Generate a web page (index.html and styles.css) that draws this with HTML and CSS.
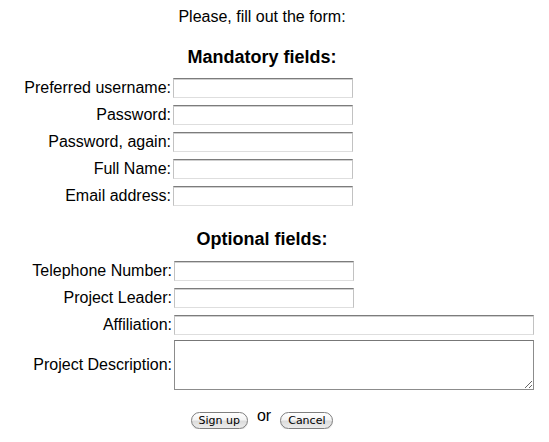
FILE: index.html
```html
<!DOCTYPE html>
<html>
<head>
<meta charset="utf-8">
<title>Sign up</title>
<link rel="stylesheet" href="styles.css">
</head>
<body>
<div class="page">
  <p class="intro">Please, fill out the form:</p>

  <h2 class="section section-first">Mandatory fields:</h2>
  <div class="fields fields-mandatory">
    <label class="label" for="username">Preferred username:</label>
    <input class="text" id="username" type="text">
    <label class="label" for="pw1">Password:</label>
    <input class="text" id="pw1" type="password">
    <label class="label" for="pw2">Password, again:</label>
    <input class="text" id="pw2" type="password">
    <label class="label" for="fullname">Full Name:</label>
    <input class="text" id="fullname" type="text">
    <label class="label" for="email">Email address:</label>
    <input class="text" id="email" type="text">
  </div>

  <h2 class="section section-second">Optional fields:</h2>
  <div class="fields fields-optional">
    <label class="label" for="phone">Telephone Number:</label>
    <input class="text" id="phone" type="text">
    <label class="label" for="leader">Project Leader:</label>
    <input class="text" id="leader" type="text">
    <label class="label" for="affiliation">Affiliation:</label>
    <input class="text text-wide" id="affiliation" type="text">
    <label class="label label-desc" for="desc">Project Description:</label>
    <textarea class="area" id="desc"></textarea>
  </div>

  <div class="actions">
    <button class="btn" type="submit">Sign up</button>
    <span class="or">or</span>
    <button class="btn" type="button">Cancel</button>
  </div>
</div>
</body>
</html>
```

FILE: styles.css
```css
html, body {
  margin: 0;
  padding: 0;
  background: #ffffff;
}

body {
  font-family: "Liberation Sans", Arial, Helvetica, sans-serif;
  font-size: 16px;
  line-height: 18px;
  color: #000000;
}

.page {
  width: 524px;
  padding-top: 8px;
}

.intro {
  margin: 0;
  text-align: center;
}

.section {
  margin: 0;
  font-size: 18px;
  line-height: 20px;
  font-weight: bold;
  text-align: center;
}

.section-first {
  margin-top: 21px;
  margin-bottom: 11px;
}

.section-second {
  margin-top: 23px;
  margin-bottom: 12px;
}

.fields {
  display: grid;
  row-gap: 7px;
  align-items: center;
}

.fields-mandatory {
  grid-template-columns: 171px auto;
  column-gap: 2px;
}

.fields-optional {
  grid-template-columns: 172px auto;
  column-gap: 2px;
}

.label {
  text-align: right;
  white-space: nowrap;
}

.text {
  box-sizing: border-box;
  width: 180px;
  height: 20px;
  margin: 0;
  padding: 1px 3px;
  font-family: "Liberation Sans", Arial, sans-serif;
  font-size: 13px;
  background: #ffffff;
  border-style: solid;
  border-width: 1px;
  border-color: #7c7c7c #c2c2c2 #dedede #c2c2c2;
  box-shadow: inset 0 1px 0 #cfcfcf;
  border-radius: 0;
  outline: none;
}

.text-wide {
  width: 360px;
}

.area {
  box-sizing: border-box;
  width: 360px;
  height: 50px;
  margin: -2px 0 0 0;
  padding: 2px;
  font-family: "Liberation Sans", Arial, sans-serif;
  font-size: 13px;
  border: 1px solid #8c8c8c;
  border-top-color: #777777;
  border-radius: 0;
  resize: both;
  outline: none;
}

.label-desc {
  margin-top: -2px;
}

.actions {
  display: flex;
  justify-content: center;
  align-items: flex-start;
  gap: 8px;
  margin-top: 17px;
}

.or {
  display: block;
  padding: 0 1px;
}

.btn {
  box-sizing: border-box;
  height: 17px;
  margin: 5px 0 0 0;
  padding: 0 7px;
  font-family: "DejaVu Sans", "Lucida Grande", sans-serif;
  font-size: 11px;
  line-height: 15px;
  color: #000000;
  border: 1px solid #7f7f7f;
  border-radius: 9px;
  background: linear-gradient(#ffffff 0%, #f4f4f4 45%, #dcdcdc 55%, #ececec 100%);
  box-shadow: 0 1px 0 rgba(0, 0, 0, 0.12);
  cursor: pointer;
}
```
